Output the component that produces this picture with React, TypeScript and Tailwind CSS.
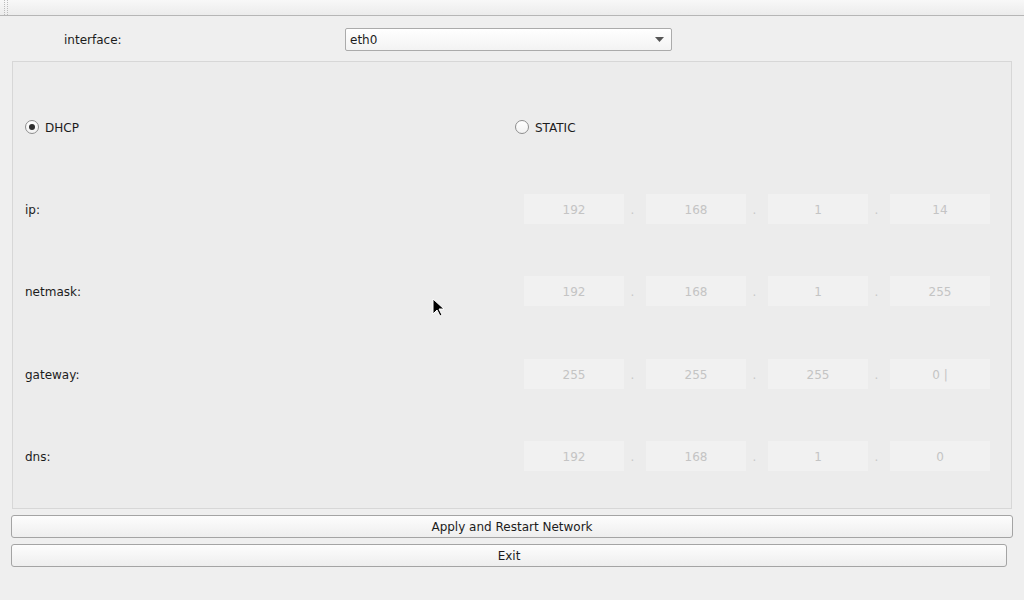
import React from 'react';

const ROWS = [
  { label: 'ip:', parts: ['192', '168', '1', '14'] },
  { label: 'netmask:', parts: ['192', '168', '1', '255'] },
  { label: 'gateway:', parts: ['255', '255', '255', '0 |'] },
  { label: 'dns:', parts: ['192', '168', '1', '0'] },
];

function Radio({ checked, label }: { checked: boolean; label: string }) {
  return (
    <div className="flex items-center gap-[6px] pt-[1px]">
      <span className="flex h-[14px] w-[14px] items-center justify-center rounded-full border border-[#8e8e8e] bg-gradient-to-b from-white to-[#f2f2f2]">
        {checked && <span className="h-[6px] w-[6px] rounded-full bg-[#2d2d2d]" />}
      </span>
      <span className="pt-[2px]">{label}</span>
    </div>
  );
}

function IpField({ parts }: { parts: string[] }) {
  return (
    <div className="ml-[9px] flex items-center">
      {parts.map((p, i) => (
        <React.Fragment key={i}>
          {i > 0 && <span className="w-[22px] pr-[5px] pt-[2px] text-center text-[#c8c8c8]">.</span>}
          <div className="flex h-[30px] w-[100px] items-center justify-center bg-[#f1f1f1] pt-[2px] text-[#c4c4c4]">
            {p}
          </div>
        </React.Fragment>
      ))}
    </div>
  );
}

export default function App() {
  return (
    <div
      className="relative flex h-[600px] w-[1024px] flex-col overflow-hidden bg-[#efefef] text-[12px] text-[#1c1c1c]"
      style={{ fontFamily: '"DejaVu Sans", sans-serif' }}
    >
      {/* toolbar strip */}
      <div className="flex h-[16px] shrink-0 border-b border-[#b6b6b6] bg-gradient-to-b from-[#f8f8f8] to-[#ececec]">
        <div className="ml-[4px] w-[1px] border-l border-dotted border-[#bcbcbc]" />
        <div className="ml-[2px] w-[1px] border-l border-dotted border-[#bcbcbc]" />
      </div>

      {/* interface row */}
      <div className="flex h-[45px] shrink-0 items-center pt-[1px]">
        <span className="ml-[64px] w-[281px] pt-[2px]">interface:</span>
        <div className="flex h-[23px] w-[327px] items-center justify-between rounded-[2px] border border-[#ababab] bg-gradient-to-b from-white to-[#f3f3f3] pl-[4px] pr-[7px]">
          <span className="pt-[1px]">eth0</span>
          <svg width="9" height="5" viewBox="0 0 9 5">
            <path d="M0 0h9L4.5 5z" fill="#555" />
          </svg>
        </div>
      </div>

      {/* settings frame */}
      <div className="mx-[12px] flex h-[448px] shrink-0 flex-col border border-[#d7d7d7] bg-[#ececec] pl-[12px] pt-[23px]">
        <div className="flex h-[82.5px] items-center">
          <div className="w-[490px]">
            <Radio checked label="DHCP" />
          </div>
          <Radio checked={false} label="STATIC" />
        </div>
        {ROWS.map((r) => (
          <div key={r.label} className="flex h-[82.5px] items-center">
            <span className="w-[490px] pt-[2px]">{r.label}</span>
            <IpField parts={r.parts} />
          </div>
        ))}
      </div>

      {/* buttons */}
      <div className="mt-[6px] flex flex-col gap-[6px] pl-[11px]">
        <button className="h-[23px] w-[1002px] rounded-[3px] border border-[#a4a4a4] bg-gradient-to-b from-[#fdfdfd] to-[#eeeeee] text-[#1c1c1c]">
          Apply and Restart Network
        </button>
        <button className="h-[23px] w-[996px] rounded-[3px] border border-[#a4a4a4] bg-gradient-to-b from-[#fdfdfd] to-[#eeeeee] text-[#1c1c1c]">
          Exit
        </button>
      </div>

      {/* mouse pointer */}
      <svg className="absolute left-[432px] top-[298px]" width="13" height="20" viewBox="0 0 13 20">
        <path d="M1 1v15l4-4 3 6 2-1-3-6h5z" fill="#000" stroke="#fff" strokeWidth="1" />
      </svg>
    </div>
  );
}
